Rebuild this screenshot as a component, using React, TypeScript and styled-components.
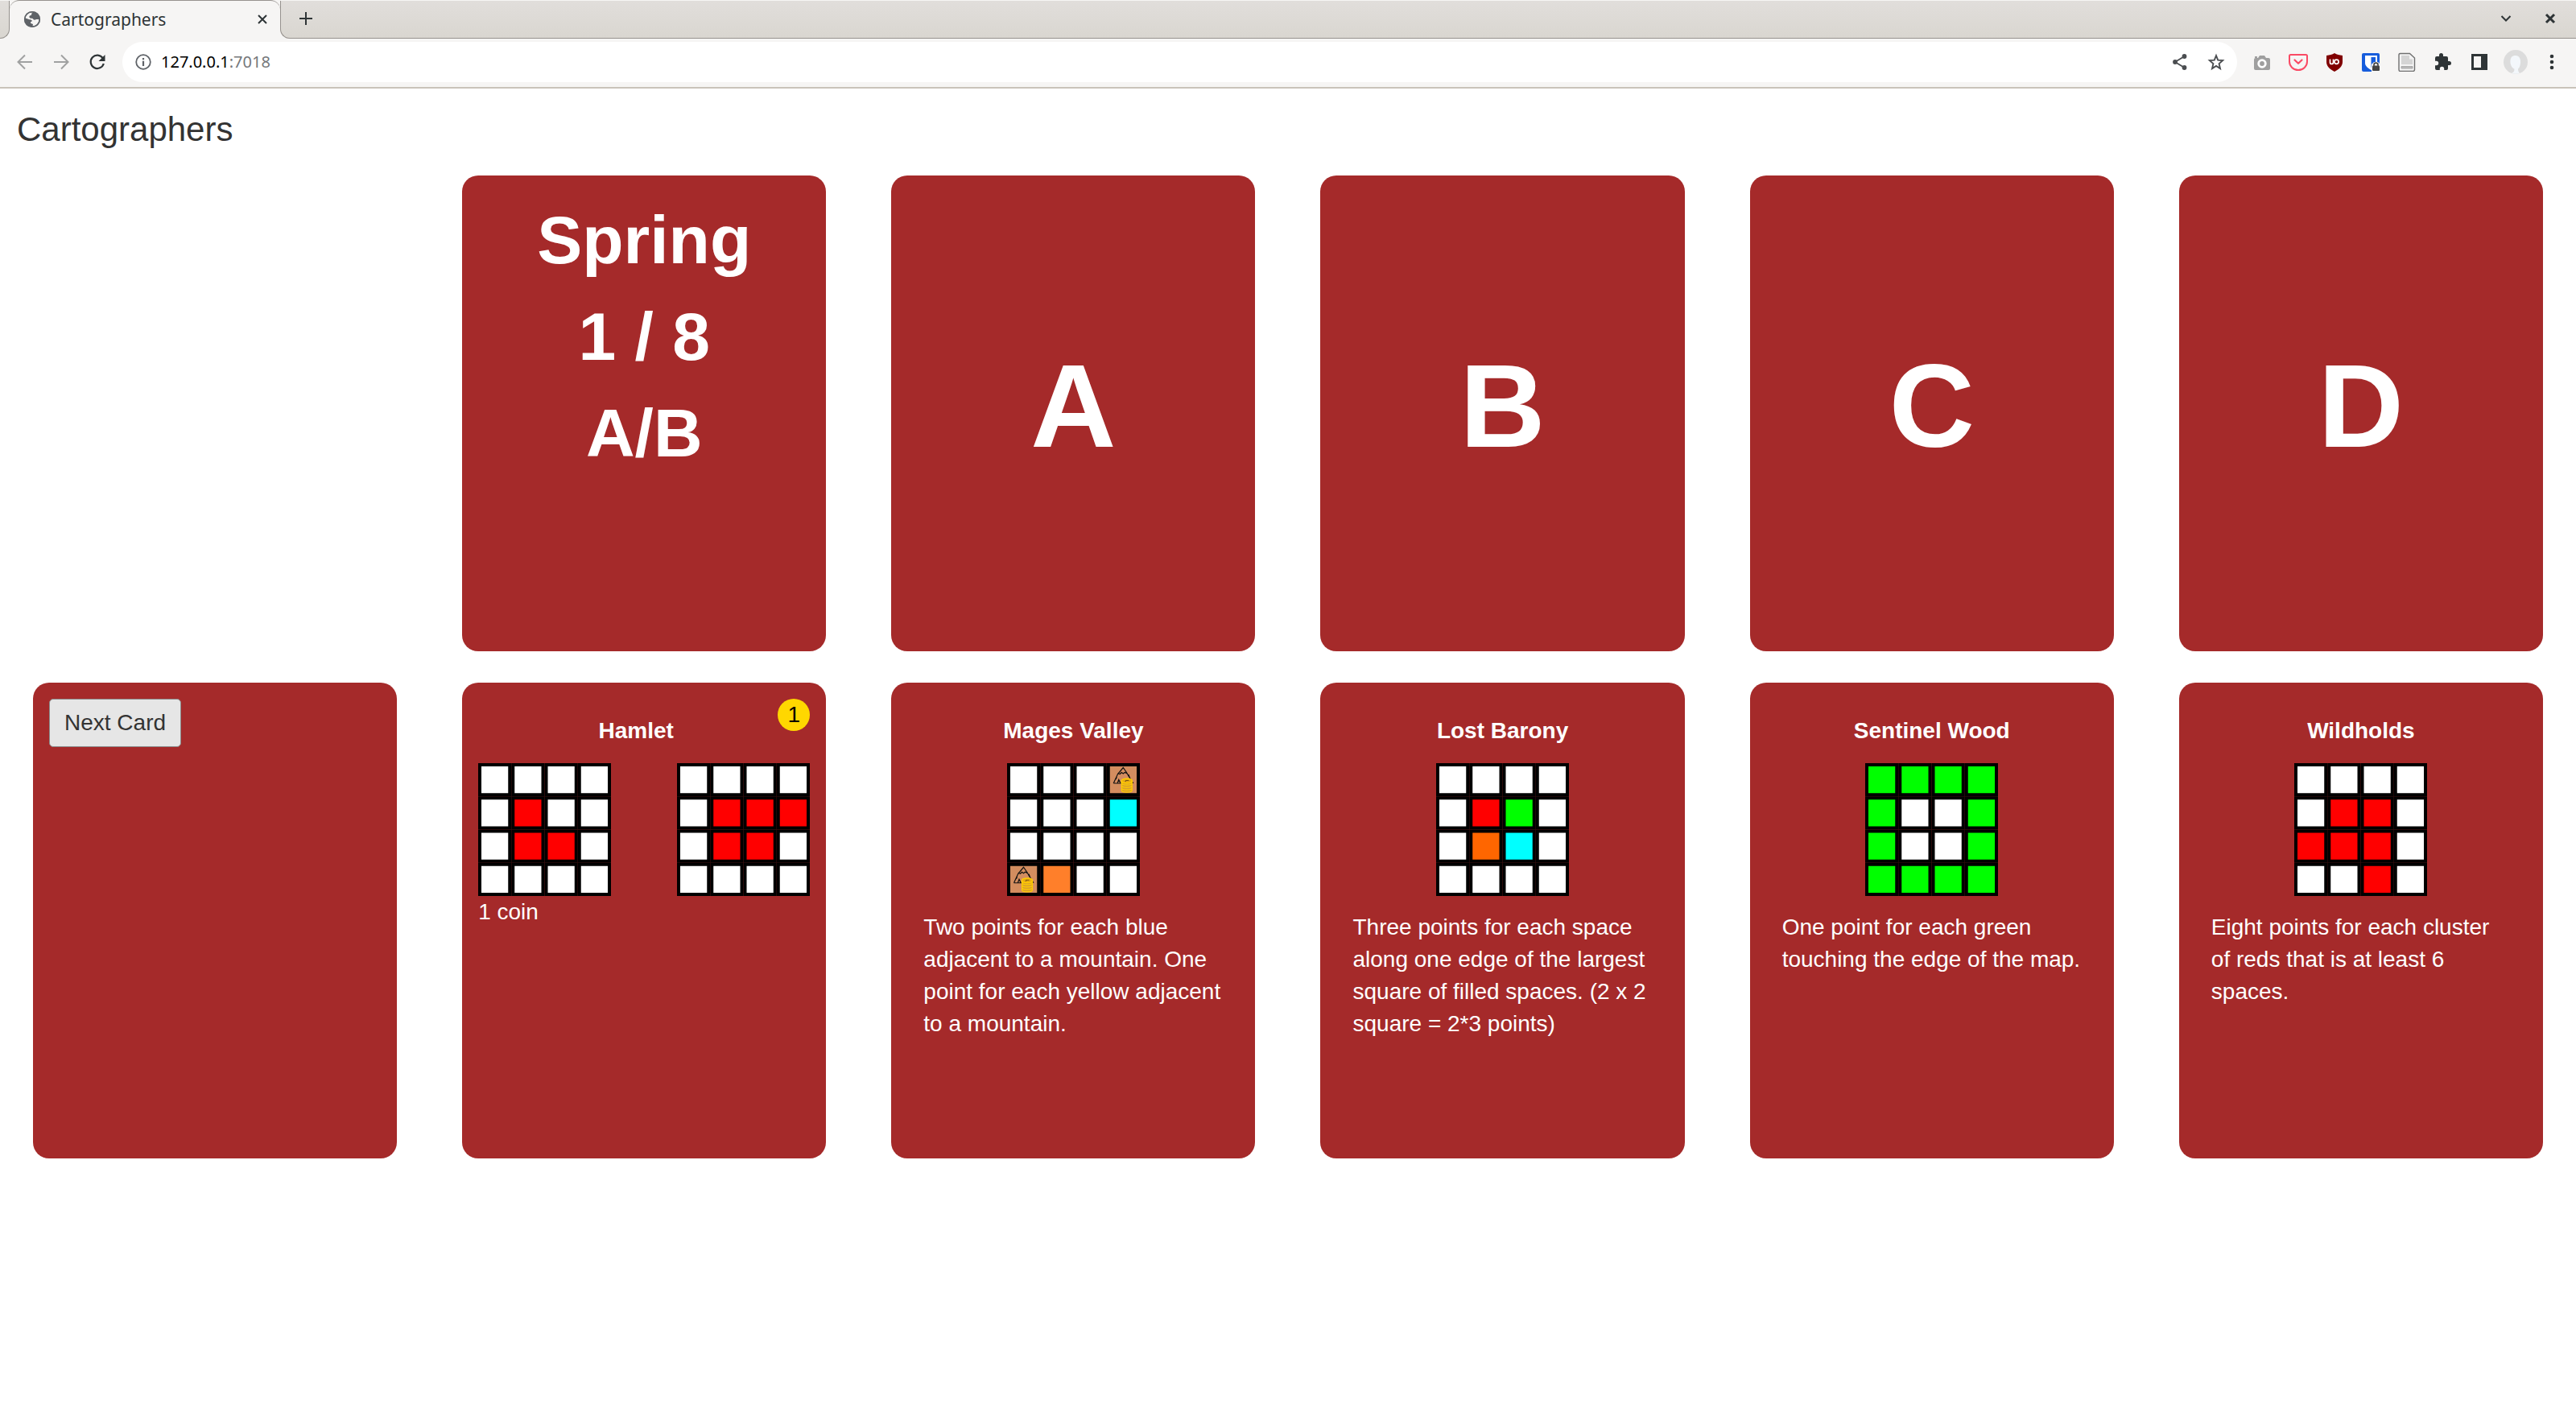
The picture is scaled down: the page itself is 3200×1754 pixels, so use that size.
import React from "react";
import styled, { createGlobalStyle } from "styled-components";

const Global = createGlobalStyle`
  *, *::before, *::after { box-sizing: border-box; }
  body {
    margin: 0;
    background: #fff;
    color: #333;
    font: 28px/40px "Liberation Sans", Arial, sans-serif;
  }
  svg { display: block; flex: none; }
`;

/* ---------- browser window ---------- */

const TabStrip = styled.div`
  display: flex;
  align-items: stretch;
  height: 48px;
  border-top: 1px solid #f6f5f4;
  background: linear-gradient(#e1dedb, #d9d6d0);
  font: 21px/28px "Noto Sans", sans-serif;
  color: #2e3436;
`;

const StripEdge = styled.div<{ $side: "left" | "right" }>`
  display: flex;
  align-items: center;
  border-bottom: 1px solid #96928e;
  ${(p) =>
    p.$side === "left"
      ? "width: 12px; border-right: 1px solid #96928e; border-bottom-right-radius: 12px;"
      : "flex: 1; border-left: 1px solid #96928e; border-bottom-left-radius: 12px; padding: 0 20px 2px 19px;"}
`;

const TabArea = styled.div`
  display: flex;
  background: #f6f5f4;
`;

const StripRest = styled.div`
  display: flex;
  flex: 1;
  background: #f6f5f4;
`;

const StripBack = styled.div<{ $grow?: boolean }>`
  display: flex;
  background: linear-gradient(#e1dedb, #d9d6d0);
  border-bottom-right-radius: ${(p) => (p.$grow ? "0" : "12px")};
  border-bottom-left-radius: ${(p) => (p.$grow ? "12px" : "0")};
  ${(p) => p.$grow && "flex: 1;"}
`;

const Tab = styled.div`
  display: flex;
  align-items: center;
  width: 336px;
  padding: 0 10px 2px 17px;
  gap: 12px;
  margin-top: -1px;
  border-top: 1px solid #96928e;
  border-radius: 12px 12px 0 0;
  background: #f6f5f4;
`;

const TabTitle = styled.span`
  flex: 1;
`;

const IconButton = styled.button`
  display: flex;
  align-items: center;
  justify-content: center;
  width: 24px;
  height: 32px;
  padding: 0;
  border: 0;
  background: none;
  color: inherit;
`;

const StripSpace = styled.div`
  flex: 1;
`;

const WindowButtons = styled.div`
  display: flex;
  gap: 31px;
`;

const Toolbar = styled.header`
  display: flex;
  align-items: center;
  height: 62px;
  padding: 0 18px 2px 19px;
  border-bottom: 2px solid #c9c3ba;
  background: #f6f5f4;
  color: #2e3436;
`;

const NavButtons = styled.nav`
  display: flex;
  gap: 21px;
  margin-right: 19px;
`;

const AddressBar = styled.div`
  display: flex;
  flex: 1;
  align-items: center;
  height: 50px;
  padding: 0 14px;
  border-radius: 25px;
  background: #fff;
  color: #4a4d50;
  font: 20px/28px "Noto Sans", sans-serif;
`;

const Address = styled.div`
  flex: 1;
  margin-left: 10px;
  color: #000;
`;

const Port = styled.span`
  color: #75787b;
`;

const AddressActions = styled.div`
  display: flex;
  gap: 21px;
`;

const Extensions = styled.div`
  display: flex;
  align-items: center;
  gap: 21px;
  margin-left: 19px;
`;

/* ---------- page ---------- */

const Heading = styled.h1`
  margin: 0;
  padding: 26px 21px 32px;
  font-size: 42px;
  font-weight: 400;
  line-height: 50px;
`;

const Board = styled.main`
  display: grid;
  grid-template-columns: repeat(6, minmax(0, 1fr));
  gap: 39px 81px;
  padding: 0 41px 40px;
`;

const Card = styled.section<{ $center?: boolean }>`
  display: flex;
  flex-direction: column;
  min-height: 591px;
  padding: 20px;
  border-radius: 20px;
  background: #a52a2a;
  color: #fff;
  ${(p) => p.$center && "align-items: center; justify-content: center;"}
`;

const Season = styled.div`
  font-size: 84px;
  font-weight: 700;
  line-height: 120px;
  text-align: center;
`;

const Letter = styled.div`
  padding-bottom: 20px;
  font-size: 147px;
  font-weight: 700;
  line-height: 200px;
`;

const NextButton = styled.button`
  align-self: flex-start;
  height: 60px;
  padding: 0 18px;
  border: 1px solid #8a8a8a;
  border-radius: 5px;
  background: #e6e6e6;
  color: #333;
  font: inherit;
`;

const CardHead = styled.div<{ $coin?: boolean }>`
  display: flex;
  align-items: flex-start;
  padding-left: ${(p) => (p.$coin ? "20px" : "0")};
`;

const CardTitle = styled.h2`
  flex: 1;
  margin: 20px 0;
  font-size: 28px;
  font-weight: 700;
  text-align: center;
`;

const Coin = styled.span`
  width: 40px;
  height: 40px;
  border-radius: 50%;
  background: gold;
  color: #000;
  text-align: center;
`;

const Maps = styled.div<{ $spread?: boolean }>`
  display: flex;
  justify-content: ${(p) => (p.$spread ? "space-between" : "center")};
`;

const Rule = styled.p`
  margin: 19px 20px;
`;

const EmptySlot = styled.div``;

/* ---------- map drawings ---------- */

const FILL: Record<string, string> = {
  ".": "#fff",
  r: "#f00",
  g: "#0f0",
  b: "#0ff",
  o: "#f60",
  y: "#ff7f2a",
  m: "#d38d5f",
};

const CELL = 165 / 4;

function Mountain({ x, y }: { x: number; y: number }) {
  return (
    <g transform={`translate(${x} ${y})`} fill="none">
      <path
        d="M8.500 22 14 10l2-2 4.500-5.500L25 9l2.500 4.500L33 22M14.500 10l2 .5 2-2 2 1.500 2-1.500 3 1.500M8.500 22H18M13.500 21.500l1.500-4 2 4M12.500 14l-1 3M27 11l2 5"
        stroke="#111"
        strokeWidth="1.200"
      />
      <path d="M18.500 19v12c0 3 13 3 13 0V19z" fill="#d9a02a" />
      <ellipse cx="25" cy="19" rx="6.500" ry="2.800" fill="#e8ab14" stroke="#fc0" strokeWidth="1.500" />
      <path
        d="M18.500 19v12M31.500 19v12M18.500 21.500c0 3.500 13 3.500 13 0M18.500 24.500c0 3.500 13 3.500 13 0M18.500 27.500c0 3.500 13 3.500 13 0M18.500 30.500c0 3.500 13 3.500 13 0"
        stroke="#fc0"
        strokeWidth="1.200"
      />
      <path d="M23 20l1-1.500h3.500" stroke="#7a5510" strokeWidth="1.200" />
    </g>
  );
}

function TerrainMap({ rows }: { rows: string[] }) {
  return (
    <svg width="165" height="165" viewBox="0 0 165 165" aria-hidden="true">
      {rows.map((row, r) =>
        row.split("").map((kind, c) => (
          <g key={`${r}-${c}`}>
            <rect
              x={c * CELL + 2}
              y={r * CELL + 2}
              width={CELL - 4}
              height={CELL - 4}
              fill={FILL[kind]}
              stroke="#000"
              strokeWidth="4"
            />
            {kind === "m" && <Mountain x={c * CELL} y={r * CELL + 3} />}
          </g>
        ))
      )}
    </svg>
  );
}

/* ---------- icons ---------- */

const Globe = () => (
  <svg width="22" height="22" viewBox="0 0 22 22">
    <circle cx="11" cy="11" r="10" fill="#5f6368" />
    <path
      d="M12 2.500c-3 1-1 3-2.500 3.500S7 6.500 7.500 8.500s3.500.5 4.500 2 2.500 1.500 4 .5l3.500 0c0 5-4 8.500-8 8.500l.5-2.500c-2-1-3.500-1-3-2.500l2-1.500c-1-2-4-1.500-5.500-2.500L2.500 9.500C3 5.500 6.500 2 12 2.500z"
      fill="#f6f5f4"
    />
    <circle cx="11" cy="11" r="9.300" fill="none" stroke="#5f6368" strokeWidth="1.600" />
  </svg>
);

const Stroke = ({
  d,
  size,
  width = 2,
}: {
  d: string;
  size: number;
  width?: number;
}) => (
  <svg width={size} height={size} viewBox={`0 0 ${size} ${size}`} fill="none">
    <path d={d} stroke="currentColor" strokeWidth={width} />
  </svg>
);

const Faded = styled(IconButton)`
  color: #a0a1a1;
`;

const Reload = () => (
  <svg width="24" height="24" viewBox="0 0 24 24" fill="none">
    <path d="M18.700 7.200A8.200 8.200 0 1 0 19.800 14" stroke="currentColor" strokeWidth="2.200" />
    <path d="M21.500 3v8h-8z" fill="currentColor" />
  </svg>
);

const Info = () => (
  <svg width="24" height="24" viewBox="0 0 24 24" fill="none">
    <circle cx="12" cy="12" r="8.800" stroke="#5f6368" strokeWidth="1.800" />
    <path d="M12 7v2.200M12 10.800V17" stroke="#5f6368" strokeWidth="2.200" />
  </svg>
);

const Share = () => (
  <svg width="24" height="24" viewBox="0 0 24 24">
    <path d="M17.500 5 6 12l11.500 7" fill="none" stroke="currentColor" strokeWidth="1.800" />
    <circle cx="17.500" cy="5" r="2.900" fill="currentColor" />
    <circle cx="6" cy="12" r="2.900" fill="currentColor" />
    <circle cx="17.500" cy="19" r="2.900" fill="currentColor" />
  </svg>
);

const Star = () => (
  <svg width="24" height="24" viewBox="0 0 24 24" fill="none">
    <path
      d="m12 4 2.200 5.600 6 .5-4.600 4 1.400 6-5-3.200-5 3.200 1.400-6-4.600-4 6-.5z"
      stroke="currentColor"
      strokeWidth="1.900"
    />
  </svg>
);

const Camera = () => (
  <svg width="24" height="24" viewBox="0 0 24 24">
    <path d="M3 5h3v2H3zM9 4h6l2 3h3q2 0 2 2v11q0 2-2 2H4q-2 0-2-2V9q0-2 2-2h3z" fill="#9f9f9f" />
    <circle cx="12" cy="14" r="4.300" fill="none" stroke="#fff" strokeWidth="2.800" />
  </svg>
);

const Pocket = () => (
  <svg width="24" height="24" viewBox="0 0 24 24" fill="none" stroke="#fa4a64" strokeWidth="2">
    <path d="M2.500 3h19q1.500 0 1.500 1.500V11.500a11 10.500 0 0 1-22 0V4.500Q1 3 2.500 3z" />
    <path d="m7.500 9.500 4.500 4.300 4.500-4.300" strokeWidth="2.200" strokeLinecap="round" strokeLinejoin="round" />
  </svg>
);

const Shield = () => (
  <svg width="24" height="24" viewBox="0 0 24 24" fill="none">
    <path d="M12 1c3 2 6 2.500 10 3v8c0 5-4 9-10 12C6 21 2 17 2 12V4c4-.5 7-1 10-3z" fill="#800000" />
    <path d="M6.500 8.500v4q0 2 2 2t2-2v-4" stroke="#fff" strokeWidth="1.700" />
    <circle cx="14.500" cy="11.800" r="2.600" stroke="#fff" strokeWidth="1.700" />
  </svg>
);

const Vault = () => (
  <svg width="24" height="24" viewBox="0 0 24 24">
    <rect x="1" y="1" width="22" height="23" rx="2" fill="#175ddc" />
    <path d="M5 4h15v9c0 4-3 6-7.500 9-4.500-3-7.500-5-7.500-9z" fill="#fff" />
    <path d="M12.500 6H18v7c0 2.500-2 4-5.500 6z" fill="#175ddc" />
    <path d="M13 15l3-3h5l3 3v9H13z" fill="#f6f5f4" />
    <rect x="14" y="16.500" width="9" height="6.500" rx="1" fill="#444" />
    <path d="M16 17v-1.500q0-2.400 2.500-2.400t2.500 2.400V17" fill="none" stroke="#444" strokeWidth="1.600" />
  </svg>
);

const Page = () => (
  <svg width="24" height="24" viewBox="0 0 24 24">
    <path d="M3.500 1.500h12l6 5.500v14.500q0 2-2 2h-16q-1.500 0-1.500-2v-18q0-2 1.500-2z" fill="#f4f4f4" stroke="#6f6f6f" strokeWidth="1.400" />
    <path d="M5 4h10v4.500h4V15H5z" fill="#d4d4d4" />
    <path d="M5 17.500h14v2.500H5z" fill="#bbb" stroke="#8a8a8a" strokeWidth=".6" />
  </svg>
);

const Puzzle = () => (
  <svg width="24" height="24" viewBox="0 0 24 24">
    <path
      d="M19.500 11H18V7a2 2 0 0 0-2-2h-4V3.500a2.500 2.500 0 0 0-5 0V5H4a2 2 0 0 0-2 2v3.800h1.500a2.700 2.700 0 0 1 0 5.400H2V20a2 2 0 0 0 2 2h3.800v-1.500a2.700 2.700 0 0 1 5.400 0V22H16a2 2 0 0 0 2-2v-4h1.500a2.500 2.500 0 0 0 0-5z"
      fill="currentColor"
    />
  </svg>
);

const SidePanel = () => (
  <svg width="24" height="24" viewBox="0 0 24 24">
    <path d="M2 2h20v20H2zM5 5v14h9V5z" fill="currentColor" fillRule="evenodd" />
  </svg>
);

const Avatar = () => (
  <svg width="30" height="30" viewBox="0 0 30 30">
    <circle cx="15" cy="15" r="15" fill="#dcdcdc" />
    <path d="M15 7c4.500 0 6.500 4 6 9-.3 4-1.500 6.500-3 7.500 0 2 .5 4 2 5.500-3 1-7 1-10 0 2.500-1 3.500-3 3.500-5.300C10 22 8 18 8.500 13 9 8.500 11.500 7 15 7z" fill="#f3f7fb" />
  </svg>
);

const Dots = () => (
  <svg width="24" height="24" viewBox="0 0 24 24" fill="currentColor">
    <circle cx="12" cy="5" r="2.300" />
    <circle cx="12" cy="12" r="2.300" />
    <circle cx="12" cy="19" r="2.300" />
  </svg>
);

const EXTENSIONS: [string, React.FC][] = [
  ["Screenshot", Camera],
  ["Pocket", Pocket],
  ["Blocker", Shield],
  ["Vault", Vault],
  ["Reader", Page],
  ["Extensions", Puzzle],
  ["Side panel", SidePanel],
  ["Profile", Avatar],
  ["Menu", Dots],
];

/* ---------- data ---------- */

const EDICTS = ["A", "B", "C", "D"];

const SCORING = [
  {
    name: "Mages Valley",
    map: ["...m", "...b", "....", "my.."],
    rule: "Two points for each blue adjacent to a mountain. One point for each yellow adjacent to a mountain.",
  },
  {
    name: "Lost Barony",
    map: ["....", ".rg.", ".ob.", "...."],
    rule: "Three points for each space along one edge of the largest square of filled spaces. (2 x 2 square = 2*3 points)",
  },
  {
    name: "Sentinel Wood",
    map: ["gggg", "g..g", "g..g", "gggg"],
    rule: "One point for each green touching the edge of the map.",
  },
  {
    name: "Wildholds",
    map: ["....", ".rr.", "rrr.", "..r."],
    rule: "Eight points for each cluster of reds that is at least 6 spaces.",
  },
];

export default function App() {
  return (
    <>
      <Global />
      <TabStrip>
        <TabArea>
          <StripBack>
            <StripEdge $side="left" />
          </StripBack>
          <Tab>
            <Globe />
            <TabTitle>Cartographers</TabTitle>
            <IconButton aria-label="Close tab">
              <Stroke size={16} d="m3 3 10 10M13 3 3 13" />
            </IconButton>
          </Tab>
        </TabArea>
        <StripRest>
          <StripBack $grow>
            <StripEdge $side="right">
              <IconButton aria-label="New tab">
                <Stroke size={18} d="M9 1v16M1 9h16" width={2} />
              </IconButton>
              <StripSpace />
              <WindowButtons>
                <IconButton aria-label="Search tabs">
                  <Stroke size={14} d="m1.500 4 5.500 5.500L12.500 4" />
                </IconButton>
                <IconButton aria-label="Close window">
                  <Stroke size={14} d="m2 2 10 10M12 2 2 12" width={3} />
                </IconButton>
              </WindowButtons>
            </StripEdge>
          </StripBack>
        </StripRest>
      </TabStrip>
      <Toolbar>
        <NavButtons>
          <Faded aria-label="Back">
            <Stroke size={20} d="M19 10H2M10 1.500 1.500 10l8.500 8.500" />
          </Faded>
          <Faded aria-label="Forward">
            <Stroke size={20} d="M1 10h17M10 1.500l8.500 8.500-8.500 8.500" />
          </Faded>
          <IconButton aria-label="Reload">
            <Reload />
          </IconButton>
        </NavButtons>
        <AddressBar>
          <Info />
          <Address>
            127.0.0.1<Port>:7018</Port>
          </Address>
          <AddressActions>
            <IconButton aria-label="Share">
              <Share />
            </IconButton>
            <IconButton aria-label="Bookmark">
              <Star />
            </IconButton>
          </AddressActions>
        </AddressBar>
        <Extensions>
          {EXTENSIONS.map(([label, Icon]) => (
            <IconButton key={label} aria-label={label}>
              <Icon />
            </IconButton>
          ))}
        </Extensions>
      </Toolbar>

      <Heading>Cartographers</Heading>
      <Board>
        <EmptySlot />
        <Card>
          <Season>Spring</Season>
          <Season>1 / 8</Season>
          <Season>A/B</Season>
        </Card>
        {EDICTS.map((letter) => (
          <Card key={letter} $center>
            <Letter>{letter}</Letter>
          </Card>
        ))}
        <Card>
          <NextButton>Next Card</NextButton>
        </Card>
        <Card>
          <CardHead $coin>
            <CardTitle>Hamlet</CardTitle>
            <Coin>1</Coin>
          </CardHead>
          <Maps $spread>
            <TerrainMap rows={["....", ".r..", ".rr.", "...."]} />
            <TerrainMap rows={["....", ".rrr", ".rr.", "...."]} />
          </Maps>
          <div>1 coin</div>
        </Card>
        {SCORING.map((card) => (
          <Card key={card.name}>
            <CardHead>
              <CardTitle>{card.name}</CardTitle>
            </CardHead>
            <Maps>
              <TerrainMap rows={card.map} />
            </Maps>
            <Rule>{card.rule}</Rule>
          </Card>
        ))}
      </Board>
    </>
  );
}
